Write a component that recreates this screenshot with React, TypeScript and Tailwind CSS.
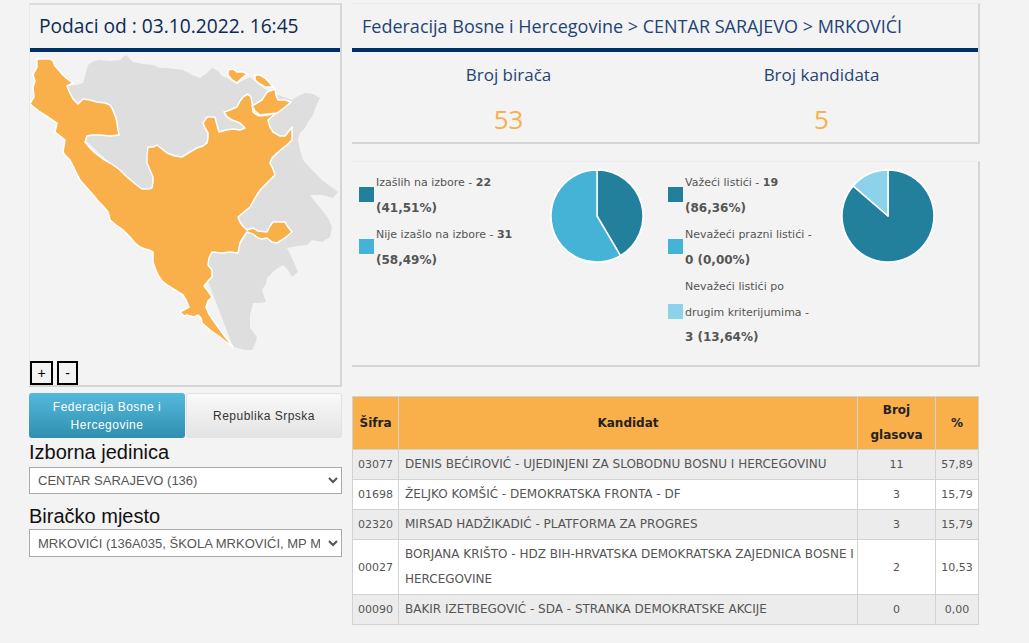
const table = [
  { code: '03077', name: 'DENIS BEĆIROVIĆ - UJEDINJENI ZA SLOBODNU BOSNU I HERCEGOVINU', votes: '11', pct: '57,89' },
  { code: '01698', name: 'ŽELJKO KOMŠIĆ - DEMOKRATSKA FRONTA - DF', votes: '3', pct: '15,79' },
  { code: '02320', name: 'MIRSAD HADŽIKADIĆ - PLATFORMA ZA PROGRES', votes: '3', pct: '15,79' },
  { code: '00027', name: 'BORJANA KRIŠTO - HDZ BIH-HRVATSKA DEMOKRATSKA ZAJEDNICA BOSNE I HERCEGOVINE', votes: '2', pct: '10,53' },
  { code: '00090', name: 'BAKIR IZETBEGOVIĆ - SDA - STRANKA DEMOKRATSKE AKCIJE', votes: '0', pct: '0,00' },
]

const grayShape =
  '67,86 76,85 83,83 85,76 88,65 94,61 100,60 110,61 120,60 123,57 126,55 130,59 133,62 143,64 153,65 160,68 167,68 175,69 183,70 192,75 200,78 206,74 212,68 218,71 222,76 227,78 237,84 244,80 250,77 257,83 263,88 275,94 292,100 298,96 305,93 313,94 320,98 316,106 313,115 308,122 305,128 300,133 298,140 300,150 303,160 312,170 322,180 330,186 338,192 333,198 322,195 310,195 316,203 322,210 328,218 332,227 330,237 322,242 312,240 307,245 297,246 287,248 292,258 298,272 292,277 288,270 283,265 275,270 267,278 266,284 262,290 264,296 266,302 258,303 253,303 250,315 250,328 257,337 255,344 252,350 245,350 233,347 200,260 150,200 85,140'

const orangeShape =
  '37,59 45,59 50,59 53,61 55,66 57,68 62,74 65,77 70,81 73,83 67,86 69,91 70,93 73,99 78,104 83,99 90,100 97,102 105,103 110,105 113,110 114,113 116,118 117,123 118,130 119,135 110,136 100,135 92,135 87,136 85,142 90,148 95,153 103,159 110,163 116,167 120,170 127,177 133,182 138,186 142,189 148,189 152,188 153,182 153,177 150,170 147,163 147,155 148,147 153,147 157,145 162,149 167,153 175,156 182,157 190,152 197,148 203,146 207,143 208,138 208,133 205,128 203,123 207,117 215,117 217,125 219,132 226,130 233,129 240,130 245,128 240,123 232,120 227,117 224,112 230,110 237,107 240,101 243,97 248,94 251,97 252,102 253,112 257,115 260,116 268,115 276,113 268,120 270,127 273,132 280,136 285,136 289,131 292,127 292,140 287,145 283,148 277,153 272,158 270,163 273,169 275,175 271,179 267,183 262,188 258,193 254,200 250,207 244,212 238,217 240,222 242,225 247,230 253,228 258,231 267,232 270,226 273,222 285,222 288,227 292,232 285,238 277,243 272,242 267,238 262,239 258,238 253,234 247,232 243,238 240,243 238,253 230,252 222,253 212,252 209,258 208,265 212,270 212,277 208,281 204,286 208,291 212,297 208,301 206,307 209,314 213,320 223,334 233,347 226,342 220,337 210,330 202,323 201,318 198,315 194,317 187,315 184,316 180,312 189,307 186,300 183,295 175,290 167,285 162,281 158,275 155,268 153,262 153,252 149,250 145,249 140,247 135,243 129,236 123,230 116,225 110,220 108,212 103,206 97,200 95,197 87,188 80,180 75,170 70,160 65,155 63,152 64,146 65,140 60,136 55,132 57,123 48,117 40,112 35,108 30,104 34,97 33,87 35,81 33,75 37,67'

function BosniaMap() {
  return (
    <svg viewBox="30 52 310 306" className="block w-[310px] h-[306px]">
      <polygon points={grayShape} fill="#dedede" />
      <polygon points={orangeShape} fill="#f9b04b" stroke="#ffffff" strokeWidth="1.5" strokeLinejoin="round" />
      <polygon points="228,70 233,69 237,72 243,72 247,74 242,78 237,83 232,80 228,75" fill="#f9b04b" stroke="#ffffff" strokeWidth="1.5" />
      <polygon points="255,75 260,75 265,78 269,82 273,87 265,87 260,84 255,80" fill="#f9b04b" stroke="#ffffff" strokeWidth="1.5" />
      <polygon points="267,92 275,89 276,95 278,100 285,100 291,102 284,108 277,113 268,114 260,115 255,111 252,106 262,100" fill="#f9b04b" stroke="#ffffff" strokeWidth="1.5" />
    </svg>
  )
}

function Pie({ slices }: { slices: { d: string; fill: string }[] }) {
  return (
    <svg viewBox="0 0 100 100" className="w-[100px] h-[100px] shrink-0">
      <circle cx="50" cy="50" r="47" fill="#ffffff" />
      {slices.map((s) => (
        <path key={s.d} d={s.d} fill={s.fill} stroke="#ffffff" strokeWidth="1.5" strokeLinejoin="round" />
      ))}
    </svg>
  )
}

function LegendRow({ color, children }: { color: string; children: React.ReactNode }) {
  return (
    <div className="flex items-center gap-[2px]">
      <span className={`w-[15px] h-[15px] shrink-0 mb-[2px] ${color}`} />
      <div className="leading-[25.5px]">{children}</div>
    </div>
  )
}

const heading = "font-['Open_Sans',sans-serif]"
const verdana = "font-['DejaVu_Sans',sans-serif] text-[11px] text-[#555]"
const boldLine = 'font-bold text-[12px]'
const cell = 'border border-[#d2d2d2] py-[2px] text-center'
const headCell = 'border border-[#d2d2d2] py-[1px] px-[5px]'

export default function App() {
  return (
    <div className="min-h-[643px] bg-[#f3f3f3] pt-[3px] pl-[29px] flex gap-[10px] font-['Liberation_Sans',sans-serif] overflow-hidden">
      <div className="w-[313px] shrink-0">
        <div className="h-[384px] border-l border-l-[#e8e8e8] border-r-2 border-r-[#d5d5d5] border-b-2 border-b-[#d5d5d5] border-t-2 border-t-[#dcdcdc] relative">
          <div className={`h-[43px] flex items-center pl-[9px] text-[19.2px] text-[#0b2a55] ${heading}`}>
            Podaci od : 03.10.2022. 16:45
          </div>
          <div className="h-[4px] bg-[#002f63]" />
          <BosniaMap />
          <div className="absolute left-0 bottom-0 flex gap-[4px]">
            <button className="w-[23px] h-[24px] border-2 border-black text-[14px] text-black">+</button>
            <button className="w-[21px] h-[24px] border-2 border-black text-[14px] text-black">-</button>
          </div>
        </div>
        <div className="mt-[6px] flex h-[45px] text-[12px] leading-[18px] tracking-[0.5px]">
          <button className="w-[156px] rounded-[3px] bg-gradient-to-b from-[#55b9dc] to-[#2f8fb0] text-white">
            Federacija Bosne i Hercegovine
          </button>
          <button className="flex-1 ml-[1px] rounded-[3px] bg-gradient-to-b from-[#f9f9f9] to-[#e3e3e3] border border-[#e2e2e2] text-[#333]">
            Republika Srpska
          </button>
        </div>
        <div className="mt-[2px] text-[20px] leading-[25px] text-[#111]">Izborna jedinica</div>
        <select className="block mt-[2px] w-[313px] h-[27px] bg-white border border-[#aaa] pl-[4px] text-[13px] text-[#555]">
          <option>CENTAR SARAJEVO (136)</option>
        </select>
        <div className="mt-[10px] text-[20px] leading-[25px] text-[#111]">Biračko mjesto</div>
        <select className="block w-[313px] h-[28px] bg-white border border-[#aaa] pl-[4px] pr-[5px] text-[13px] text-[#555]">
          <option>MRKOVIĆI (136A035, ŠKOLA MRKOVIĆI, MP MRKOVIĆI)</option>
        </select>
      </div>

      <div className="w-[628px] shrink-0">
        <div className="h-[141px] border-t border-t-[#ebebeb] border-r-2 border-r-[#d5d5d5] border-b-2 border-b-[#d5d5d5]">
          <div className={`h-[44px] flex items-center pl-[10px] text-[18px] text-[#1f4473] ${heading}`}>
            Federacija Bosne i Hercegovine &gt; CENTAR SARAJEVO &gt; MRKOVIĆI
          </div>
          <div className="h-[4px] bg-[#002f63]" />
          <div className={`grid grid-cols-2 text-center ${heading}`}>
            <div>
              <div className="mt-[11px] text-[17px] leading-[24px] text-[#1f4473]">Broj birača</div>
              <div className="mt-[17px] text-[26px] leading-[30px] text-[#f9b04b]">53</div>
            </div>
            <div>
              <div className="mt-[11px] text-[17px] leading-[24px] text-[#1f4473]">Broj kandidata</div>
              <div className="mt-[17px] text-[26px] leading-[30px] text-[#f9b04b]">5</div>
            </div>
          </div>
        </div>

        <div className={`mt-[17px] h-[206px] border-t border-t-[#ebebeb] border-r-2 border-r-[#d5d5d5] border-b-2 border-b-[#d5d5d5] flex pt-[8px] ${verdana}`}>
          <div className="w-[316px] flex pl-[7px]">
            <div className="w-[188px] flex flex-col gap-[1px]">
              <LegendRow color="bg-[#23809c]">
                Izašlih na izbore - <b>22</b><br /><span className={boldLine}>(41,51%)</span>
              </LegendRow>
              <LegendRow color="bg-[#45b3d6]">
                Nije izašlo na izbore - <b>31</b><br /><span className={boldLine}>(58,49%)</span>
              </LegendRow>
            </div>
            <div className="-mt-[4px]">
              <Pie
                slices={[
                  { d: 'M50 50 L50 4 A46 46 0 0 1 73.4 89.6 Z', fill: '#23809c' },
                  { d: 'M50 50 L73.4 89.6 A46 46 0 1 1 50 4 Z', fill: '#45b3d6' },
                ]}
              />
            </div>
          </div>
          <div className="flex">
            <div className="w-[155px] flex flex-col gap-[1px]">
              <LegendRow color="bg-[#23809c]">
                Važeći listići - <b>19</b><br /><span className={boldLine}>(86,36%)</span>
              </LegendRow>
              <LegendRow color="bg-[#45b3d6]">
                Nevažeći prazni listići -<br /><span className={boldLine}>0 (0,00%)</span>
              </LegendRow>
              <LegendRow color="bg-[#8cd2ea]">
                Nevažeći listići po<br />drugim kriterijumima -<br /><span className={boldLine}>3 (13,64%)</span>
              </LegendRow>
            </div>
            <div className="ml-[15px] -mt-[4px]">
              <Pie
                slices={[
                  { d: 'M50 50 L50 4 A46 46 0 1 1 15.2 19.9 Z', fill: '#23809c' },
                  { d: 'M50 50 L15.2 19.9 A46 46 0 0 1 50 4 Z', fill: '#8cd2ea' },
                ]}
              />
            </div>
          </div>
        </div>

        <table className={`mt-[29px] w-[627px] border-collapse table-fixed ${verdana}`}>
          <thead>
            <tr className="bg-[#f9b04b] text-[#222] text-[12px] leading-[25px]">
              <th className="w-[46px] border border-[#d2d2d2] py-[1px]">Šifra</th>
              <th className={headCell}>Kandidat</th>
              <th className={`w-[78px] ${headCell}`}>Broj glasova</th>
              <th className="w-[43px] border border-[#d2d2d2] py-[1px]">%</th>
            </tr>
          </thead>
          <tbody className="leading-[25px]">
            {table.map((row, i) => (
              <tr key={row.code} className={i === 1 || i === 3 ? 'bg-white' : 'bg-[#ececec]'}>
                <td className={cell}>{row.code}</td>
                <td className="border border-[#d2d2d2] py-[2px] pl-[6px] pr-0 text-[12px]">{row.name}</td>
                <td className={cell}>{row.votes}</td>
                <td className={cell}>{row.pct}</td>
              </tr>
            ))}
          </tbody>
        </table>
      </div>
    </div>
  )
}
